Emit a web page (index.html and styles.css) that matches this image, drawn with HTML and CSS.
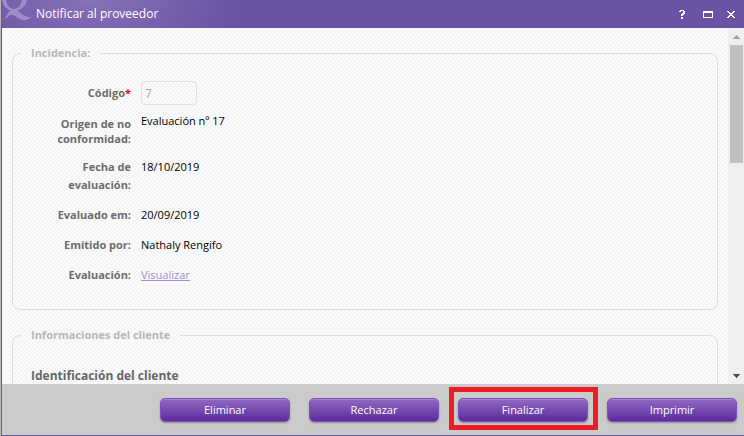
FILE: index.html
```html
<!DOCTYPE html>
<html lang="es">
  <head>
    <meta charset="UTF-8" />
    <meta name="viewport" content="width=device-width, initial-scale=1.0" />
    <title>Notificar al proveedor</title>
    <link rel="stylesheet" href="styles.css">
  </head>
  <body>
    <div class="window">
      <header class="titlebar">
        <svg class="logo" width="31" height="21" viewBox="0 0 31 21" aria-hidden="true">
          <path d="M0 0C1 6 5 11 12 11C19 11 24 6 25 0H20C19 5 16 9 12 9C8 9 5 5 4 0Z" />
          <path d="M3 19C5 13 9 9 13 10C19 11 21 18 29 17C26 21 20 21 16 18C12 15 9 13 6 17Z" />
        </svg>
        <h1 class="title">Notificar al proveedor</h1>
        <div class="window-actions">
          <button type="button" class="icon-button help" aria-label="Ayuda">
            <svg width="6" height="9" viewBox="0 0 6 9" shape-rendering="crispEdges">
              <path d="M1 0h4v1h1v3h-1v1h-1v1h-2v-2h1v-1h1v-2h-2v1h-2v-1h1zM2 7h2v2h-2z" />
            </svg>
          </button>
          <button type="button" class="icon-button" aria-label="Maximizar">
            <svg width="10" height="7" viewBox="0 0 10 7" shape-rendering="crispEdges">
              <path fill-rule="evenodd" d="M0 0h10v7h-10zM1 2v4h8v-4z" />
            </svg>
          </button>
          <button type="button" class="icon-button" aria-label="Cerrar">
            <svg width="8" height="7" viewBox="0 0 8 7" shape-rendering="crispEdges">
              <path d="M0 0h2v1h1v1h2v-1h1v-1h2v1h-1v1h-1v1h-1v1h1v1h1v1h1v1h-2v-1h-1v-1h-2v1h-1v1h-2v-1h1v-1h1v-1h1v-1h-1v-1h-1v-1h-1z" />
            </svg>
          </button>
        </div>
      </header>

      <div class="body">
        <form class="content" id="supplier-form">
          <fieldset class="group">
            <legend>Incidencia:</legend>
            <div class="row row-code">
              <label for="code">Código<span class="required">*</span></label>
              <input type="text" id="code" name="code" value="7" disabled />
            </div>
            <div class="row row-compact">
              <label for="origin">Origen de no conformidad:</label>
              <output id="origin">Evaluación nº 17</output>
            </div>
            <div class="row">
              <label for="evaluation-date">Fecha de evaluación:</label>
              <output id="evaluation-date">18/10/2019</output>
            </div>
            <div class="row">
              <label for="evaluated-on">Evaluado em:</label>
              <output id="evaluated-on">20/09/2019</output>
            </div>
            <div class="row">
              <label for="issued-by">Emitido por:</label>
              <output id="issued-by">Nathaly Rengifo</output>
            </div>
            <div class="row">
              <span class="label">Evaluación:</span>
              <a href="#">Visualizar</a>
            </div>
          </fieldset>

          <fieldset class="group">
            <legend>Informaciones del cliente</legend>
            <h2>Identificación del cliente</h2>
          </fieldset>
        </form>

        <div class="scrollbar" aria-hidden="true">
          <svg width="7" height="4" viewBox="0 0 7 4" shape-rendering="crispEdges">
            <path fill="#a3a3a3" d="M3 0h1v1h1v1h1v1h1v1h-7v-1h1v-1h1v-1h1z" />
          </svg>
          <div class="thumb"></div>
          <svg class="arrow-down" width="7" height="4" viewBox="0 0 7 4" shape-rendering="crispEdges">
            <path fill="#505050" d="M0 0h7v1h-1v1h-1v1h-1v1h-1v-1h-1v-1h-1v-1h-1z" />
          </svg>
        </div>
      </div>

      <footer class="footer">
        <button type="button" class="action">Eliminar</button>
        <button type="button" class="action">Rechazar</button>
        <button type="button" class="action highlighted">Finalizar</button>
        <button type="button" class="action">Imprimir</button>
      </footer>
    </div>
  </body>
</html>
```

FILE: styles.css
```css
* {
  box-sizing: border-box;
}

body {
  margin: 0;
  padding-left: 1px;
  background-color: #b9b9b9;
  font-family: "Open Sans", "Noto Sans", sans-serif;
  font-size: 11px;
  line-height: 18px;
  color: #000;
}

.window {
  display: flex;
  flex-direction: column;
  height: 100vh;
  border-left: 1px solid #6a52a4;
  border-bottom: 1px solid #6a52a4;
}

.titlebar {
  display: flex;
  align-items: center;
  height: 28px;
  padding-right: 9px;
  background: radial-gradient(ellipse 150px 70px at 90px 0, #8672b6, #6a52a4);
  color: #fff;
}

.logo {
  align-self: flex-start;
  fill: #9d8cc6;
}

.title {
  flex: 1;
  margin: 0 0 0 3px;
  font-size: 12px;
  font-weight: 500;
}

.window-actions {
  display: flex;
  align-items: center;
  gap: 14px;
}

.icon-button {
  display: flex;
  padding: 0;
  border: none;
  background: none;
  cursor: pointer;
}

.icon-button svg {
  fill: #fff;
}

.help {
  margin-right: 4px;
}

.body {
  display: flex;
  flex: 1;
  min-height: 0;
}

.content {
  flex: 1;
  overflow: hidden;
  padding: 16px 10px 0;
  background-color: #fbfbfb;
  background-image:
    radial-gradient(circle at 1px 1px, #f4f4f4 1px, transparent 1px),
    radial-gradient(circle at 3px 3px, #f4f4f4 1px, transparent 1px);
  background-size: 4px 4px;
}

.group {
  margin: 0 0 16px;
  padding: 19px 18px 13px;
  border: 1px solid #dcdcdc;
  border-radius: 8px;
}

legend {
  margin-left: -10px;
  padding: 0 10px;
  font-weight: 700;
  color: #b8b8b8;
}

.row {
  display: flex;
  gap: 10px;
  margin-bottom: 12px;
}

.row label,
.label {
  width: 100px;
  padding-left: 20px;
  text-align: right;
  font-weight: 700;
  color: #6c6c6c;
}

.row-code {
  align-items: center;
  margin-bottom: 7px;
}

.row-compact label {
  padding-top: 4px;
  line-height: 15px;
}

.required {
  color: #f00;
}

input {
  width: 56px;
  height: 24px;
  padding: 0 3px;
  border: 1px solid #e0e0e0;
  border-radius: 4px;
  background: transparent;
  font: inherit;
  font-size: 12px;
  color: #aaa;
}

a {
  color: #9a94d2;
}

h2 {
  margin: 4px 0 0;
  font-size: 12px;
  font-weight: 700;
  line-height: 18px;
  color: #666;
}

.scrollbar {
  display: flex;
  flex-direction: column;
  align-items: center;
  width: 16px;
  padding: 7px 0 6px;
  background: #f0f0f0;
}

.thumb {
  width: 13px;
  height: 118px;
  margin-top: 6px;
  background: #c1c1c1;
}

.arrow-down {
  margin-top: auto;
}

.footer {
  display: flex;
  align-items: center;
  justify-content: flex-end;
  gap: 19px;
  height: 51px;
  padding-right: 7px;
  background: #cbcbcb;
}

.action {
  position: relative;
  width: 130px;
  height: 24px;
  padding: 0;
  border: 1px solid #7d50bd;
  border-radius: 5px;
  background: linear-gradient(#9068c2, #5c2c9c);
  box-shadow: inset 0 1px 0 #a583d0, 0 1px 2px rgba(0, 0, 0, 0.3);
  font: inherit;
  font-weight: 500;
  color: #fff;
  cursor: pointer;
}

.highlighted::after {
  content: "";
  position: absolute;
  inset: -12px -11px -9px -10px;
  border: 5px solid #ed1c24;
}
```
